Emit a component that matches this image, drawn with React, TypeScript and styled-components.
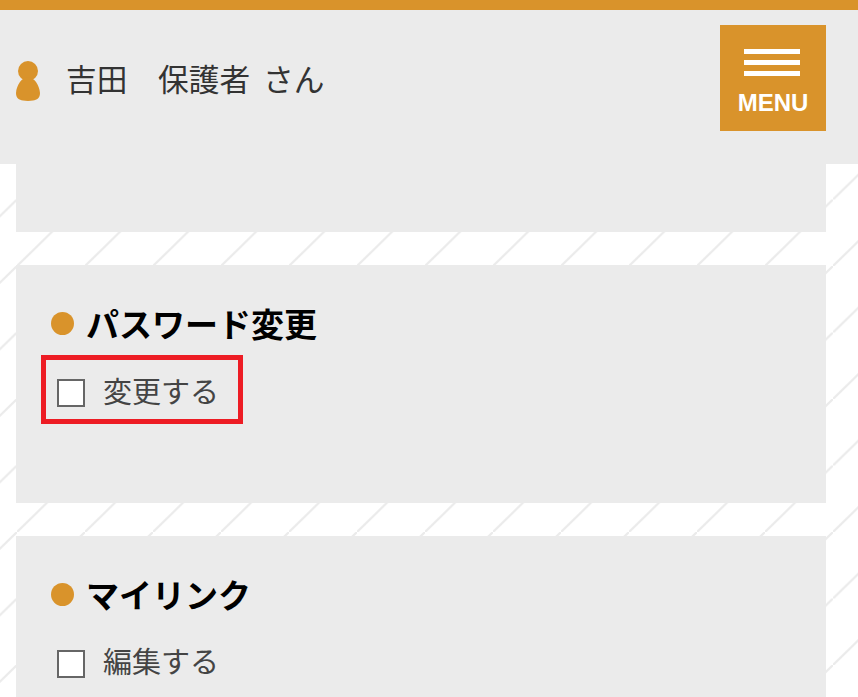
import React from "react";
import styled, { createGlobalStyle } from "styled-components";

const Global = createGlobalStyle`
  html, body { margin: 0; padding: 0; }
  body { font-family: "Noto Sans CJK JP", "Liberation Sans", sans-serif; }
`;

const Page = styled.div`
  width: 858px;
  height: 697px;
  overflow: hidden;
  background-color: #fff;
  background-image: linear-gradient(
    to bottom right,
    transparent calc(50% - 1.6px),
    #ebebeb calc(50% - 0.6px),
    #ebebeb calc(50% + 0.6px),
    transparent calc(50% + 1.6px)
  );
  background-size: 68px 66.5px;
  background-position: 17px 0;
`;

const Header = styled.header`
  height: 154px;
  border-top: 10px solid #d9932b;
  background: #ebebeb;
  display: flex;
  align-items: flex-start;
  justify-content: space-between;
  padding: 0 32px 0 16px;
`;

const User = styled.div`
  display: flex;
  align-items: flex-start;
  gap: 26px;
  margin-top: 51px;
`;

const UserName = styled.span`
  font-size: 30.7px;
  line-height: 46px;
  color: #333;
  white-space: pre;
  word-spacing: 6px;
  margin-top: -6px;
`;

const MenuButton = styled.button`
  width: 106px;
  height: 106px;
  margin-top: 15px;
  border: 0;
  padding: 24px 0 0;
  background: #d9932b;
  display: flex;
  flex-direction: column;
  align-items: center;
  color: #fff;
`;

const Bars = styled.span`
  display: flex;
  flex-direction: column;
  gap: 6.5px;
  width: 56px;
  margin-left: -2px;
`;

const Bar = styled.span`
  display: block;
  height: 4.5px;
  background: #fff;
`;

const MenuLabel = styled.span`
  font-family: "Liberation Sans", sans-serif;
  font-weight: 700;
  font-size: 24px;
  line-height: 28px;
  margin-top: 13px;
`;

const Main = styled.main`
  padding: 0 32px 0 16px;
  display: flex;
  flex-direction: column;
  gap: 33px;
`;

const Card = styled.section<{ $h: number }>`
  height: ${(p) => p.$h}px;
  flex: none;
  background: #ebebeb;
  padding: 0 35px;
  box-sizing: border-box;
  display: flex;
  flex-direction: column;
  align-items: flex-start;
`;

const Title = styled.h2<{ $top: number }>`
  margin: ${(p) => p.$top}px 0 0;
  font-size: 33px;
  line-height: 48px;
  font-weight: 700;
  color: #000;
  display: flex;
  align-items: center;
  gap: 12px;
`;

const Dot = styled.span`
  width: 23px;
  height: 23px;
  border-radius: 50%;
  background: #d9932b;
  flex: none;
  margin-top: 1px;
`;

const Highlight = styled.div`
  margin: 8px 0 0 -10px;
  border: 5px solid #ed1c24;
  width: 202px;
  height: 69px;
  box-sizing: border-box;
  display: flex;
  align-items: center;
  padding-left: 11px;
`;

const Plain = styled.div`
  margin-top: 20px;
  padding-left: 6px;
  display: flex;
  align-items: center;
`;

const Check = styled.span<{ $drop: number }>`
  width: 28px;
  height: 28px;
  box-sizing: border-box;
  border: 2px solid #666;
  background: #fff;
  flex: none;
  margin: ${(p) => p.$drop}px 18px 0 0;
`;

const CheckText = styled.span`
  font-size: 29px;
  line-height: 44px;
  color: #444;
`;

const PersonIcon = () => (
  <svg width="24" height="40" viewBox="0 0 24 40" fill="#d9932b">
    <circle cx="12" cy="10" r="10" />
    <path d="M12 16C6 16 .5 24 0 32c0 5 3 7 7 7.500 3 .5 7 .5 10 0 4-.5 7-2.500 7-7.500C23.500 24 18 16 12 16z" />
  </svg>
);

export default function App() {
  return (
    <Page>
      <Global />
      <Header>
        <User>
          <PersonIcon />
          <UserName>吉田　保護者 さん</UserName>
        </User>
        <MenuButton>
          <Bars>
            <Bar />
            <Bar />
            <Bar />
          </Bars>
          <MenuLabel>MENU</MenuLabel>
        </MenuButton>
      </Header>
      <Main>
        <Card $h={68} />
        <Card $h={238}>
          <Title $top={34}>
            <Dot />
            パスワード変更
          </Title>
          <Highlight>
            <Check $drop={6} />
            <CheckText>変更する</CheckText>
          </Highlight>
        </Card>
        <Card $h={238}>
          <Title $top={34}>
            <Dot />
            マイリンク
          </Title>
          <Plain>
            <Check $drop={8} />
            <CheckText>編集する</CheckText>
          </Plain>
        </Card>
      </Main>
    </Page>
  );
}
